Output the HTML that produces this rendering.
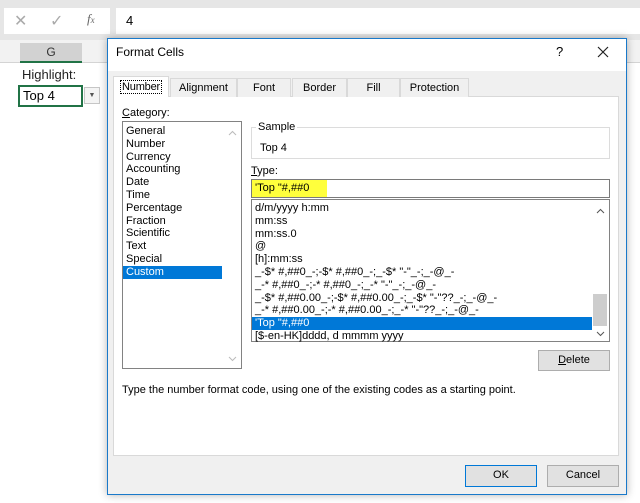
<!DOCTYPE html><html><head><style>
*{box-sizing:border-box;margin:0;padding:0}
body{width:640px;height:503px;overflow:hidden;background:#fff;font-family:"Liberation Sans",sans-serif;font-size:11px;color:#000;position:relative}
.a{position:absolute}
.list div{height:12.8px;line-height:12.8px;padding-left:3px;white-space:nowrap}
.btn{position:absolute;background:#e1e1e1;border:1px solid #adadad;text-align:center;line-height:19px;font-size:11px}
.tab{position:absolute;top:78px;height:19px;border:1px solid #d9d9d9;border-bottom:none;background:#f0f0f0;text-align:center;line-height:18px}
</style></head><body>
<div class="a" style="left:0;top:0;width:640px;height:40px;background:#e6e6e6"></div>
<div class="a" style="left:4px;top:8px;width:106px;height:26px;background:#fff"></div>
<div class="a" style="left:14px;top:11px;color:#aaa;font-size:16px">✕</div>
<div class="a" style="left:50px;top:11px;color:#aaa;font-size:16px">✓</div>
<div class="a" style="left:87px;top:11px;color:#666;font-size:13px;font-style:italic;font-family:'Liberation Serif',serif">f<span style="font-size:9px">x</span></div>
<div class="a" style="left:116px;top:8px;width:524px;height:26px;background:#fff"></div>
<div class="a" style="left:126px;top:13px;font-size:13px">4</div>
<div class="a" style="left:0;top:40px;width:640px;height:23px;background:#f2f2f2;border-bottom:1px solid #d4d4d4"></div>
<div class="a" style="left:20px;top:43px;width:62px;height:20px;background:#d2d2d2;border-bottom:2px solid #217346;text-align:center;line-height:18px;font-size:12px;color:#333">G</div>
<div class="a" style="left:22px;top:67px;font-size:13px;color:#222">Highlight:</div>
<div class="a" style="left:18px;top:85px;width:65px;height:22px;border:2px solid #217346;font-size:13px;line-height:18px;padding-left:3px">Top 4</div>
<div class="a" style="left:84px;top:87px;width:16px;height:17px;border:1px solid #c6c6c6;background:#f4f4f4;font-size:7px;text-align:center;line-height:16px;color:#555">▼</div>

<div class="a" style="left:107px;top:38px;width:520px;height:457px;background:#f0f0f0;border:1px solid #1979ca;box-shadow:0 0 8px rgba(0,0,0,.3)"></div>
<div class="a" style="left:108px;top:39px;width:518px;height:32px;background:#fff"></div>
<div class="a" style="left:116px;top:45px;font-size:12px">Format Cells</div>
<div class="a" style="left:556px;top:44px;font-size:13px">?</div>
<svg class="a" style="left:597px;top:46px" width="12" height="12"><path d="M1 1L11 11M11 1L1 11" stroke="#222" stroke-width="1.2"/></svg>

<div class="a" style="left:113px;top:96px;width:506px;height:360px;background:#fff;border:1px solid #d9d9d9"></div>
<div class="tab" style="left:113px;top:76px;width:56px;height:21px;background:#fff;border-color:#d9d9d9;line-height:20px"><span style="border:1px dotted #000;padding:0 1px;letter-spacing:-0.2px">Number</span></div>
<div class="tab" style="left:170px;width:67px">Alignment</div>
<div class="tab" style="left:237px;width:54px">Font</div>
<div class="tab" style="left:292px;width:55px">Border</div>
<div class="tab" style="left:347px;width:53px">Fill</div>
<div class="tab" style="left:400px;width:69px">Protection</div>

<div class="a" style="left:122px;top:107px"><u>C</u>ategory:</div>
<div class="a list" style="left:122px;top:121px;width:120px;height:248px;border:1px solid #828282;padding-top:3px">
<div>General</div><div>Number</div><div>Currency</div><div>Accounting</div><div>Date</div><div>Time</div><div>Percentage</div><div>Fraction</div><div>Scientific</div><div>Text</div><div>Special</div><div style="background:#0078d7;color:#fff;width:99px">Custom</div>
</div>
<svg class="a" style="left:228px;top:130px" width="9" height="6"><path d="M1 5L4.5 1.5L8 5" stroke="#bbb" fill="none"/></svg>
<svg class="a" style="left:228px;top:356px" width="9" height="6"><path d="M1 1L4.5 4.5L8 1" stroke="#bbb" fill="none"/></svg>

<div class="a" style="left:251px;top:127px;width:359px;height:32px;border:1px solid #dcdcdc"></div>
<div class="a" style="left:256px;top:121px;background:#fff;padding:0 2px">Sample</div>
<div class="a" style="left:260px;top:142px">Top 4</div>
<div class="a" style="left:251px;top:165px"><u>T</u>ype:</div>
<div class="a" style="left:251px;top:179px;width:359px;height:19px;border:1px solid #7a7a7a"></div>
<div class="a" style="left:252px;top:180px;width:75px;height:17px;background:#ffff3c"></div>
<div class="a" style="left:255px;top:182px">'Top "#,##0</div>
<div class="a list" style="left:251px;top:199px;width:359px;height:143px;border:1px solid #828282;padding-top:2px">
<div>d/m/yyyy h:mm</div><div>mm:ss</div><div>mm:ss.0</div><div>@</div><div>[h]:mm:ss</div>
<div>_-$* #,##0_-;-$* #,##0_-;_-$* "-"_-;_-@_-</div>
<div>_-* #,##0_-;-* #,##0_-;_-* "-"_-;_-@_-</div>
<div>_-$* #,##0.00_-;-$* #,##0.00_-;_-$* "-"??_-;_-@_-</div>
<div>_-* #,##0.00_-;-* #,##0.00_-;_-* "-"??_-;_-@_-</div>
<div style="background:#0078d7;color:#fff;width:340px">'Top "#,##0</div>
<div>[$-en-HK]dddd, d mmmm yyyy</div>
</div>
<div class="a" style="left:593px;top:294px;width:14px;height:32px;background:#cdcdcd"></div>
<svg class="a" style="left:596px;top:208px" width="9" height="6"><path d="M1 5L4.5 1.5L8 5" stroke="#555" fill="none"/></svg>
<svg class="a" style="left:596px;top:331px" width="9" height="6"><path d="M1 1L4.5 4.5L8 1" stroke="#555" fill="none"/></svg>
<div class="btn" style="left:538px;top:350px;width:72px;height:21px"><u>D</u>elete</div>
<div class="a" style="left:122px;top:384px">Type the number format code, using one of the existing codes as a starting point.</div>
<div class="btn" style="left:465px;top:465px;width:72px;height:22px;border:1px solid #0078d7">OK</div>
<div class="btn" style="left:547px;top:465px;width:72px;height:22px">Cancel</div>
</body></html>
